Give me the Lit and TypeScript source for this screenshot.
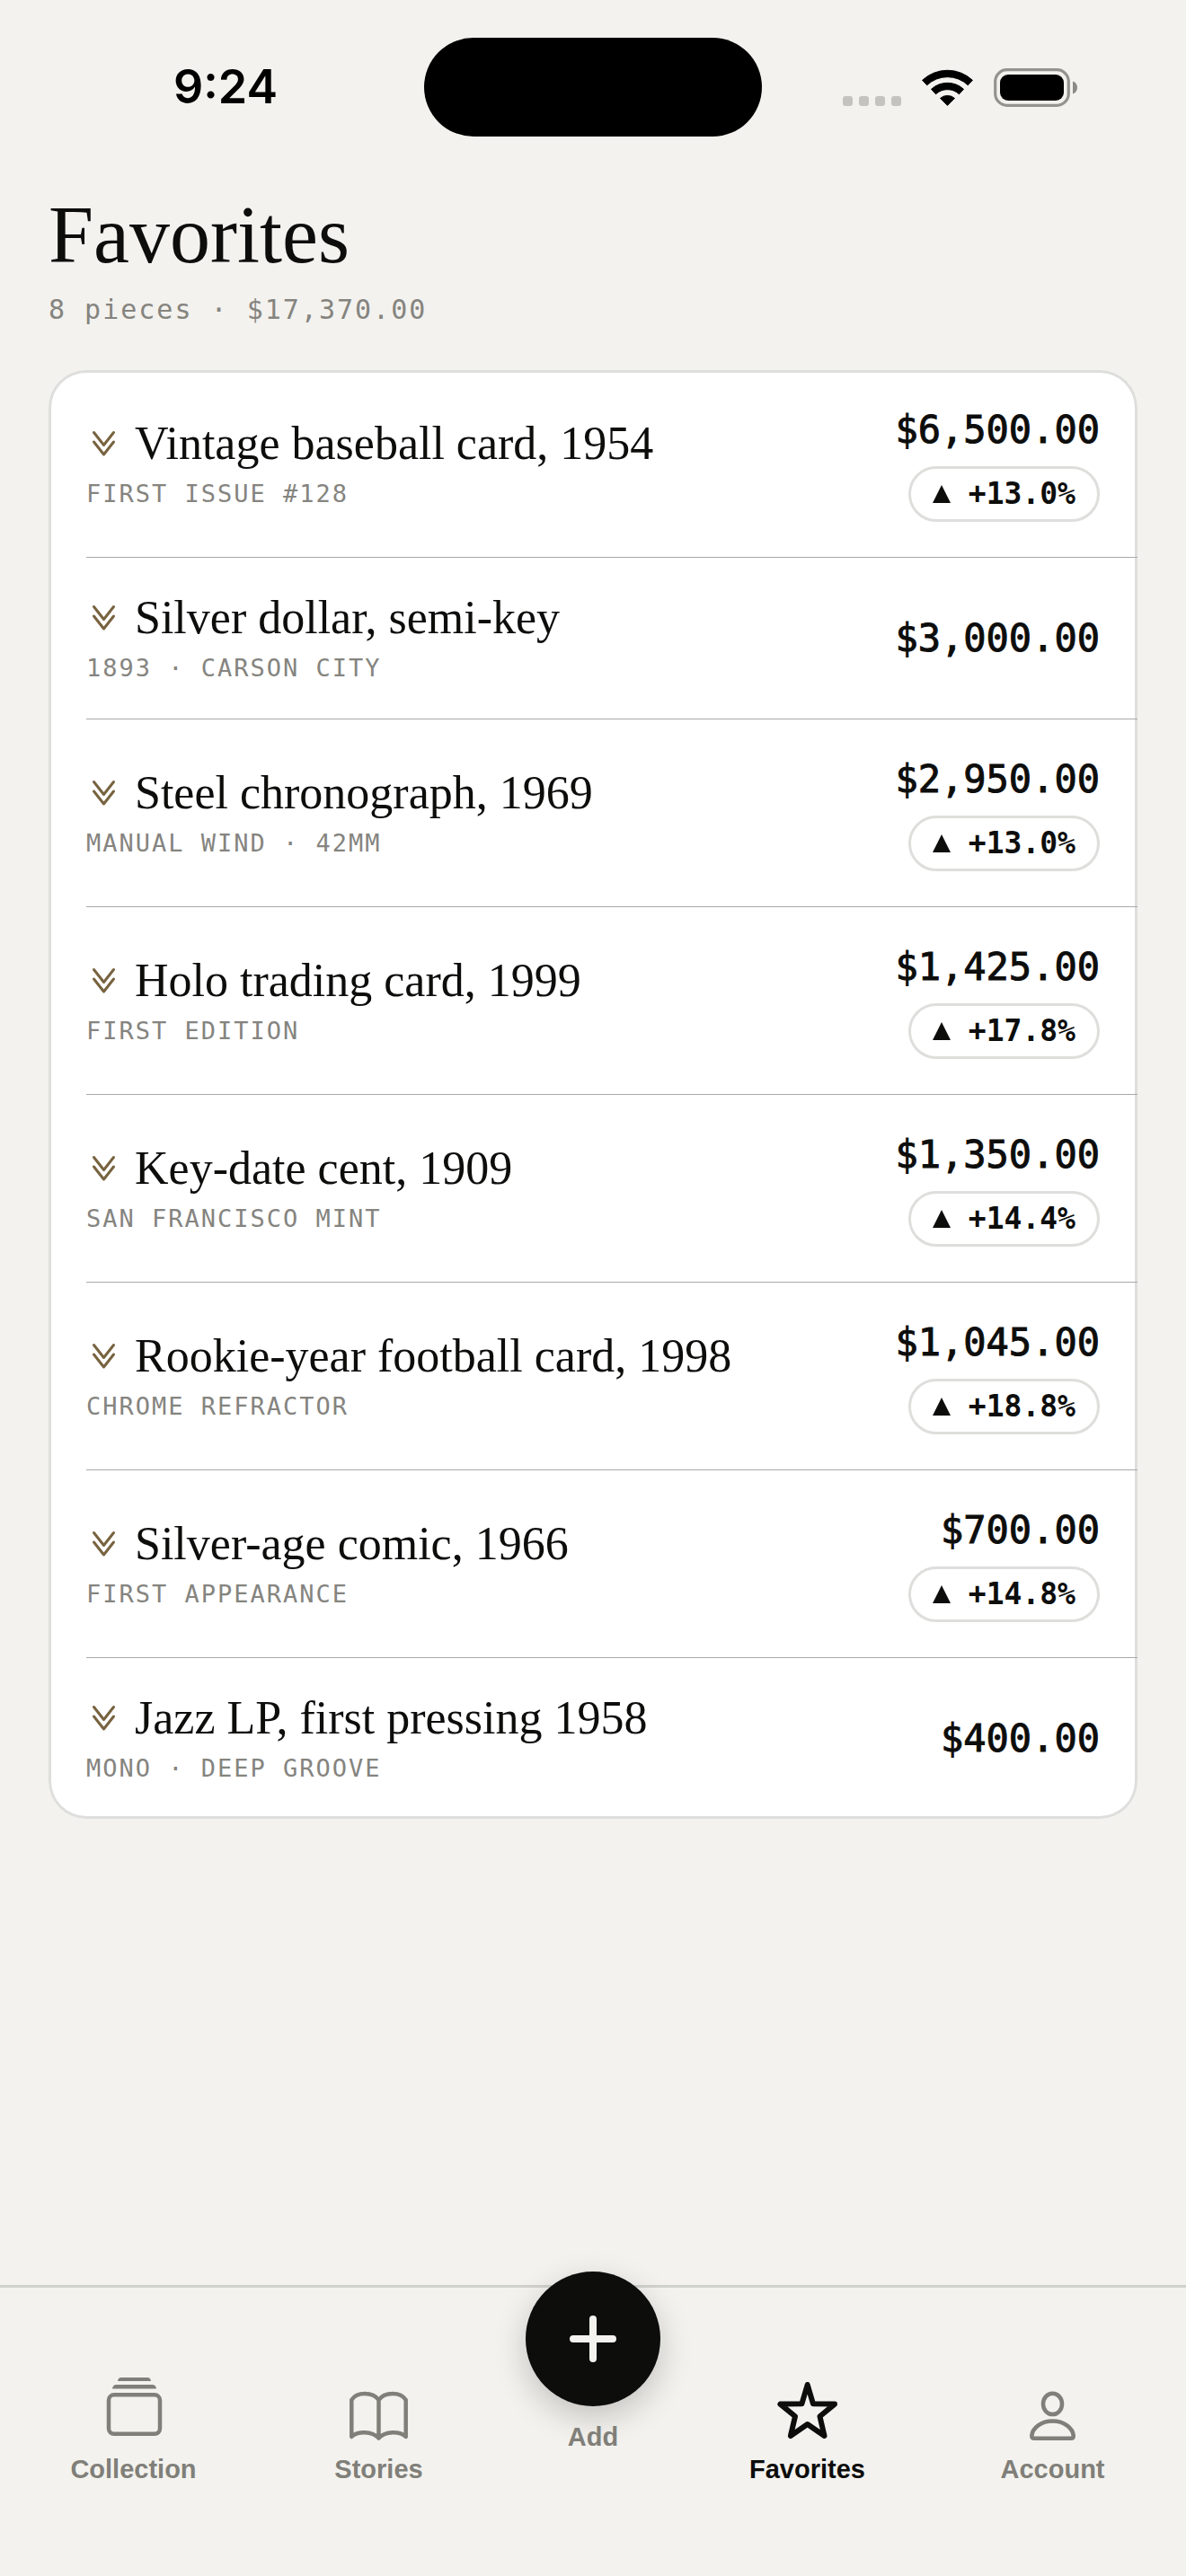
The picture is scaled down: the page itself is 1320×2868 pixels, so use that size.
import { LitElement, html, css, svg, nothing } from "lit";
import { customElement, property } from "lit/decorators.js";

interface Piece {
  name: string;
  detail: string;
  price: string;
  change?: string;
}

const PIECES: Piece[] = [
  { name: "Vintage baseball card, 1954", detail: "FIRST ISSUE #128", price: "$6,500.00", change: "+13.0%" },
  { name: "Silver dollar, semi-key", detail: "1893 · CARSON CITY", price: "$3,000.00" },
  { name: "Steel chronograph, 1969", detail: "MANUAL WIND · 42MM", price: "$2,950.00", change: "+13.0%" },
  { name: "Holo trading card, 1999", detail: "FIRST EDITION", price: "$1,425.00", change: "+17.8%" },
  { name: "Key-date cent, 1909", detail: "SAN FRANCISCO MINT", price: "$1,350.00", change: "+14.4%" },
  { name: "Rookie-year football card, 1998", detail: "CHROME REFRACTOR", price: "$1,045.00", change: "+18.8%" },
  { name: "Silver-age comic, 1966", detail: "FIRST APPEARANCE", price: "$700.00", change: "+14.8%" },
  { name: "Jazz LP, first pressing 1958", detail: "MONO · DEEP GROOVE", price: "$400.00" },
];

@customElement("status-bar")
export class StatusBar extends LitElement {
  static styles = css`
    :host {
      display: grid;
      grid-template-columns: 1fr 376px 1fr;
      align-items: center;
      padding-top: 42px;
    }
    .time {
      padding-left: 30px;
      text-align: center;
      font: 600 52px/60px Inter, sans-serif;
      color: #000;
    }
    .island {
      height: 110px;
      border-radius: 55px;
      background: #000;
    }
    .icons {
      display: flex;
      justify-content: flex-end;
      align-items: center;
      gap: 23px;
      padding-right: 121px;
    }
    svg {
      display: block;
    }
  `;

  render() {
    return html`
      <time class="time">9:24</time>
      <div class="island"></div>
      <div class="icons">
        <svg width="65" height="43" viewBox="0 0 65 43" aria-hidden="true">
          ${[0, 18, 36, 54].map((x) => svg`<rect x=${x} y="31" width="11" height="11" rx="3" fill="#c4c3bf" />`)}
        </svg>
        <svg width="57" height="43" viewBox="0 0 57 43" aria-hidden="true">
          <g transform="translate(28.5 42)" stroke="#000" stroke-width="1" stroke-linejoin="round">
            <path d="M-27.9-28.7A40.8 40.8 0 0 1 27.9-28.7L22.8-23.2A33 33 0 0 0-22.8-23.2Z" />
            <path d="M-18-18.7A26.600 26.600 0 0 1 18-18.7L13-13.200A19 19 0 0 0-13-13.200Z" />
            <path d="M-8-8.600A12.200 12.200 0 0 1 8-8.600L0-.6Z" />
          </g>
        </svg>
        <svg width="93" height="43" viewBox="0 0 93 43" aria-hidden="true">
          <rect x="1.7" y="1.7" width="81.6" height="39.6" rx="13" fill="none" stroke="#949390" stroke-width="3.2" />
          <rect x="7" y="7" width="71" height="29" rx="9" />
          <path d="M88 14.5C91 15.5 93 18 93 21.5S91 27.5 88 28.5Z" fill="#8b8a87" />
        </svg>
      </div>
    `;
  }
}

@customElement("piece-row")
export class PieceRow extends LitElement {
  @property({ attribute: false }) piece!: Piece;

  static styles = css`
    :host {
      display: flex;
      align-items: center;
      justify-content: space-between;
      gap: 24px;
      padding: 39px 42px 39px 0;
    }
    .text {
      display: flex;
      flex-direction: column;
      gap: 12px;
    }
    .name {
      display: flex;
      align-items: center;
      gap: 15px;
      margin: 0;
      font: 400 52px/55px "Liberation Serif", serif;
      color: #0d0d0c;
    }
    .chevrons {
      flex: none;
      width: 39px;
      height: 39px;
      fill: none;
      stroke: #786340;
      stroke-width: 3;
      stroke-linecap: round;
      stroke-linejoin: round;
    }
    .detail {
      margin: 0;
      font: 400 27px/34px "DejaVu Sans Mono", monospace;
      letter-spacing: 2px;
      color: #85847f;
    }
    .value {
      display: flex;
      flex-direction: column;
      align-items: flex-end;
      gap: 12px;
      font-family: "DejaVu Sans Mono", monospace;
      color: #0d0d0c;
    }
    .price {
      font-size: 42px;
      line-height: 56px;
      -webkit-text-stroke: 1px currentColor;
    }
    .change {
      display: flex;
      align-items: center;
      gap: 20px;
      box-sizing: border-box;
      height: 62px;
      padding: 0 24px;
      border: 3px solid #dededc;
      border-radius: 31px;
      font-size: 33px;
      font-weight: 700;
      line-height: 40px;
    }
    .up {
      width: 20px;
      height: 20px;
    }
  `;

  render() {
    const { name, detail, price, change } = this.piece;
    return html`
      <div class="text">
        <h2 class="name">
          <svg class="chevrons" viewBox="0 0 39 39" aria-hidden="true">
            <path d="M8.5 7.5L19.5 21.5L30.5 7.5M8.5 18L19.5 32L30.5 18" />
          </svg>
          <span>${name}</span>
        </h2>
        <p class="detail">${detail}</p>
      </div>
      <div class="value">
        <span class="price">${price}</span>
        ${change
          ? html`<span class="change">
              <svg class="up" viewBox="0 0 20 20" aria-hidden="true"><path d="M10 0L20 20H0Z" fill="#0d0d0c" /></svg>
              <span>${change}</span>
            </span>`
          : nothing}
      </div>
    `;
  }
}

@customElement("tab-bar")
export class TabBar extends LitElement {
  static styles = css`
    :host {
      display: block;
    }
    .bar {
      display: grid;
      grid-template-columns: 1fr 1fr 204px 1fr 1fr;
      padding: 0 12px 101px;
      border-top: 3px solid #d1d1cd;
    }
    .tab,
    .add {
      display: flex;
      flex-direction: column;
      align-items: center;
      font: 700 29px/36px "Liberation Sans", sans-serif;
      color: #807f79;
      text-decoration: none;
    }
    .tab {
      gap: 13px;
      padding-top: 99px;
    }
    .tab.active {
      color: #0d0d0c;
    }
    .icon {
      width: 72px;
      height: 72px;
      fill: none;
      stroke: currentColor;
      stroke-width: 4.5;
      stroke-linecap: round;
      stroke-linejoin: round;
    }
    .solid {
      fill: currentColor;
      stroke: none;
    }
    .bold {
      stroke-width: 6;
    }
    .add {
      align-self: start;
      gap: 16px;
      margin-top: -18px;
      padding: 0;
      border: 0;
      background: none;
    }
    .disc {
      display: grid;
      place-items: center;
      width: 150px;
      height: 150px;
      border-radius: 50%;
      background: #0d0d0c;
      box-shadow: 0 12px 36px rgba(0, 0, 0, 0.2);
    }
    .plus {
      width: 54px;
      height: 54px;
      stroke: #f3f2ee;
      stroke-width: 8;
      stroke-linecap: round;
    }
  `;

  render() {
    return html`
      <nav class="bar">
        <a class="tab" href="#collection">
          <svg class="icon" viewBox="12 16 72 72" aria-hidden="true">
            <rect x="20" y="36.3" width="57" height="43.5" rx="6" />
            <path class="solid" d="M30 21Q30.5 17 34 17H63Q66.5 17 67 21Z" />
            <path class="solid" d="M24 29.5Q24.5 25 28.5 25H68.5Q72.5 25 73 29.5Z" />
          </svg>
          Collection
        </a>
        <a class="tab" href="#stories">
          <svg class="icon" viewBox="16 16 72 72" aria-hidden="true">
            <path
              d="M21.3 83V42C27 32.6 45 32.6 51.5 42C58 32.6 76 32.6 81.7 42V83C75 76.5 59 76.5 51.5 84.5C44 76.5 28 76.5 21.3 83ZM51.5 42V84"
            />
          </svg>
          Stories
        </a>
        <button class="add" type="button">
          <span class="disc">
            <svg class="plus" viewBox="0 0 54 54" aria-hidden="true"><path d="M5 27H49M27 5V49" /></svg>
          </span>
          Add
        </button>
        <a class="tab active" href="#favorites" aria-current="page">
          <svg class="icon bold" viewBox="15 16 72 72" aria-hidden="true">
            <path d="M50.7 25L57 46.3L81 46.6L64.5 60.3L69.5 82L50.7 69L31.9 82L37 60.3L20.4 46.6L44.4 46.3Z" />
          </svg>
          Favorites
        </a>
        <a class="tab" href="#account">
          <svg class="icon" viewBox="16 16 72 72" aria-hidden="true">
            <ellipse cx="51.5" cy="46.4" rx="10.5" ry="11.7" />
            <path
              d="M31 84.7Q28.3 84.7 28.3 82C29 73 39 65.5 51.5 65.5C64 65.5 74 73 74.8 82Q74.8 84.7 72 84.7Z"
            />
          </svg>
          Account
        </a>
      </nav>
    `;
  }
}

@customElement("app-root")
export class AppRoot extends LitElement {
  static styles = css`
    :host {
      display: flex;
      flex-direction: column;
      min-height: 100vh;
      background: #f3f2ee;
    }
    .content {
      flex: 1;
      padding: 60px 54px 48px;
    }
    .title {
      margin: 0;
      font: 400 90px/100px "Liberation Serif", serif;
      color: #0d0d0c;
    }
    .summary {
      margin: 13px 0 47px;
      font: 400 30px/40px "DejaVu Sans Mono", monospace;
      letter-spacing: 2px;
      color: #85847f;
    }
    .card {
      margin: 0;
      padding: 0 0 0 42px;
      list-style: none;
      border-radius: 42px;
      background: #fff;
      box-shadow: inset 0 0 0 3px #dededc;
    }
    .item + .item {
      border-top: 1px solid #a9a9a9;
    }
  `;

  render() {
    return html`
      <status-bar></status-bar>
      <main class="content">
        <h1 class="title">Favorites</h1>
        <p class="summary">8 pieces · $17,370.00</p>
        <ul class="card">
          ${PIECES.map((piece) => html`<li class="item"><piece-row .piece=${piece}></piece-row></li>`)}
        </ul>
      </main>
      <tab-bar></tab-bar>
    `;
  }
}
